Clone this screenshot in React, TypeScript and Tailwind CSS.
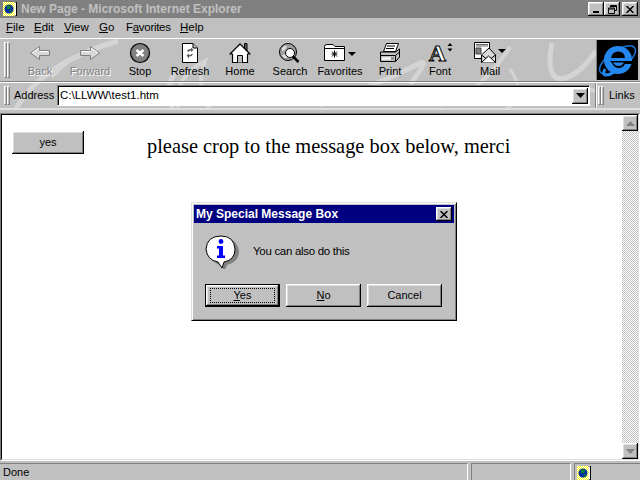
import type { ReactNode } from 'react';

const raised = 'shadow-[inset_-1px_-1px_0_#000,inset_1px_1px_0_#fff,inset_-2px_-2px_0_#808080,inset_2px_2px_0_#dfdfdf]';

function Grip() {
  return (
    <div className="flex self-stretch my-[3px]">
      <div className="w-[3px] border border-t-white border-l-white border-r-[#808080] border-b-[#808080]" />
      <div className="w-[3px] border border-t-white border-l-white border-r-[#808080] border-b-[#808080]" />
    </div>
  );
}

function BackIcon({ flip }: { flip?: boolean }) {
  return (
    <svg width="24" height="20" viewBox="0 0 24 20" className={flip ? '-scale-x-100' : ''}>
      <path d="M2.5 10 L11.5 3.5 V7.5 H21.5 V12.5 H11.5 V16.5 Z" fill="#d8d8d8" stroke="#808080" />
      <path d="M4 10 L11 5 M12 8.5 H20" stroke="#fff" fill="none" />
    </svg>
  );
}

function StopIcon() {
  return (
    <svg width="22" height="22" viewBox="0 0 22 22">
      <circle cx="11" cy="11" r="9.5" fill="#808080" stroke="#000" strokeWidth="1.2" />
      <path d="M7.5 8 L14.5 14 M14.5 8 L7.5 14" stroke="#fff" strokeWidth="2.6" />
    </svg>
  );
}

function RefreshIcon() {
  return (
    <svg width="20" height="22" viewBox="0 0 20 22">
      <path d="M2.5 1.5 H13 L17.5 6 V20.5 H2.5 Z" fill="#fff" stroke="#000" />
      <path d="M13 1.5 V6 H17.5" fill="#c0c0c0" stroke="#000" />
      <path d="M7 9 Q8 6.5 11 7 V5.5 L13.5 8 L11 10 V8.5 Q9 8.5 8.5 10 Z M13 12 Q12 15 9 14.5 V16.5 L6.5 13.5 L9 11.5 V13 Q11 13 11.5 12 Z" fill="#606060" />
    </svg>
  );
}

function HomeIcon() {
  return (
    <svg width="22" height="22" viewBox="0 0 22 22">
      <path d="M15.5 1.5 H18 V9 H15.5 Z" fill="#606060" stroke="#000" />
      <path d="M1 12 L11 2 L21 12 L18.5 12 V20.5 H3.5 V12 Z" fill="#fff" stroke="#000" strokeWidth="1.2" strokeLinejoin="round" />
      <path d="M8.5 20.5 V13.5 H13.5 V20.5" fill="#c0c0c0" stroke="#000" />
    </svg>
  );
}

function SearchIcon() {
  return (
    <svg width="24" height="22" viewBox="0 0 24 22">
      <circle cx="10" cy="10" r="8.5" fill="#a0a0a0" stroke="#000" />
      <path d="M4 6 Q7 3 9 4 L7 8 L4 9 Z M4 13 L8 12 L9 16 L6 16 Z" fill="#e0e0e0" />
      <circle cx="12" cy="11" r="4.5" fill="#fff" stroke="#000" />
      <path d="M15 14.5 L20.5 20" stroke="#000" strokeWidth="2.5" />
    </svg>
  );
}

function FavoritesIcon() {
  return (
    <svg width="34" height="20" viewBox="0 0 34 20">
      <path d="M1.5 17.5 V3.5 Q1.5 1.5 4 1.5 H10 L12 3.5 H21.5 V17.5 Z" fill="#fff" stroke="#000" />
      <path d="M1.5 5.5 H21.5" stroke="#000" />
      <path d="M11.5 7.5 V14.5 M8.5 11 H14.5 M9 8.5 L14 13.5 M14 8.5 L9 13.5" stroke="#000" />
      <path d="M25 9 H33 L29 13 Z" fill="#000" />
    </svg>
  );
}

function PrintIcon() {
  return (
    <svg width="22" height="22" viewBox="0 0 22 22">
      <path d="M7.5 1.5 H19.5 L16.5 9.5 H4.5 Z" fill="#fff" stroke="#000" />
      <path d="M8 4 H16 M7 6.5 H15" stroke="#000" />
      <path d="M1.5 10 H16.5 L20.5 7 V15 L16.5 19.5 H1.5 Z" fill="#c0c0c0" stroke="#000" />
      <path d="M1.5 13.5 H16.5 V19.5 M16.5 13.5 L20.5 10" stroke="#000" fill="none" />
      <path d="M3 15.5 H12 V17.5 H3 Z" fill="#fff" />
      <path d="M12 15.5 H15 V17.5 H12 Z" fill="#808080" />
    </svg>
  );
}

function FontIcon() {
  return (
    <div className="relative w-[26px] h-[22px] flex items-center">
      <span className="w-[21px] text-center leading-[20px] text-[24px] font-bold text-white [-webkit-text-stroke:1px_#000] font-['Liberation_Serif',serif]">A</span>
      <svg className="absolute right-0 top-0" width="6" height="10" viewBox="0 0 6 10">
        <path d="M0.5 4 L3 1 L5.5 4 Z M0.5 6.5 H5.5 L3 9.5 Z" fill="#000" />
      </svg>
    </div>
  );
}

function MailIcon() {
  return (
    <svg width="32" height="22" viewBox="0 0 32 22">
      <path d="M0.5 0.5 H15.5 V16.5 H0.5 Z" fill="#fff" stroke="#000" />
      <path d="M2 2.5 H14 M2 4 H14" stroke="#606060" />
      <path d="M2 6 H7 V12 H2 Z" fill="#808080" stroke="#404040" />
      <path d="M7.5 13 L15 6 L21.5 13 V20.5 H7.5 Z" fill="#d8d8d8" stroke="#000" />
      <path d="M7.5 20.5 L14.5 14 L21.5 20.5 M7.5 13 L12 16.5 M21.5 13 L17 16.5" fill="#fff" stroke="#000" />
      <path d="M24 7 H32 L28 11 Z" fill="#000" />
    </svg>
  );
}

function ToolButton({ label, icon, disabled }: { label: string; icon: ReactNode; disabled?: boolean }) {
  return (
    <div className="w-[50px] flex flex-col items-center">
      <div className="h-[22px] flex items-center justify-center">{icon}</div>
      <span className={`leading-[14px] whitespace-nowrap ${disabled ? 'text-[#808080] [text-shadow:1px_1px_0_#fff]' : 'text-black'}`}>{label}</span>
    </div>
  );
}

function IeLogo() {
  return (
    <svg width="41" height="40" viewBox="0 0 41 40">
      <rect width="41" height="40" fill="#000" />
      <ellipse cx="20.5" cy="20" rx="21" ry="9" transform="rotate(-35 20.5 20)" fill="none" stroke="#1874d8" strokeWidth="1.5" />
      <circle cx="21" cy="20" r="14" fill="#2288f0" />
      <path d="M14 18 Q15 11.5 21.5 11.5 Q27.5 11.5 28 18 Z" fill="#000" />
      <path d="M13 21 H36 V24 H28 Q26 28 22 28 Q17 28 15 23 Z" fill="#000" />
      <path d="M16 22.5 H27 Q25 26 21.5 26 Q18 26 16 22.5 Z" fill="#2288f0" />
      <path d="M8 29 Q5 35 9 35 Q13 35 17 32" fill="none" stroke="#2288f0" strokeWidth="3" />
    </svg>
  );
}

function PageIcon() {
  return (
    <svg width="14" height="14" viewBox="0 0 14 14">
      <defs>
        <pattern id="page-dither" width="2" height="2" patternUnits="userSpaceOnUse">
          <rect width="2" height="2" fill="#ffff00" />
          <rect width="1" height="1" fill="#ffffff" />
          <rect x="1" y="1" width="1" height="1" fill="#ffffff" />
        </pattern>
      </defs>
      <path d="M0 0 H12 V14 H0 Z" fill="url(#page-dither)" />
      <path d="M11.5 0 H13.5 V14 H11.5" fill="#fff" stroke="#000" />
      <circle cx="6" cy="7" r="4.5" fill="#0030a0" />
      <path d="M4 3 L8 4 L7 7 L4 7 Z M6 9 L9 8 L8 11 Z" fill="#108030" />
    </svg>
  );
}

function DialogButton({ children, focused }: { children: ReactNode; focused?: boolean }) {
  return (
    <div className={`w-[75px] h-[23px] flex items-center justify-center ${focused ? 'border border-black' : ''} ${raised}`}>
      {focused ? (
        <div className="w-[65px] h-[15px] flex items-center justify-center border border-dotted border-black">{children}</div>
      ) : children}
    </div>
  );
}

function ScrollButton({ up }: { up?: boolean }) {
  return (
    <div className={`w-4 h-4 bg-[#c0c0c0] flex items-center justify-center ${raised}`}>
      <svg width="9" height="5" viewBox="0 0 9 5">
        <path d={up ? 'M4.5 0 L9 5 H0 Z' : 'M0 0 H9 L4.5 5 Z'} fill="#808080" />
      </svg>
    </div>
  );
}

export default function App() {
  return (
    <div className="relative w-[640px] h-[480px] overflow-hidden flex flex-col bg-[#c0c0c0] text-black text-[11px] font-['Liberation_Sans',sans-serif]">
      {/* title bar */}
      <div className="h-[18px] bg-[#808080] flex items-center pl-[3px] pr-[2px]">
        <PageIcon />
        <span className="ml-[4px] font-bold text-[12px] text-[#c0c0c0]">New Page - Microsoft Internet Explorer</span>
        <div className="ml-auto flex items-center">
          <div className={`w-4 h-[14px] bg-[#c0c0c0] flex items-end justify-center pb-[3px] ${raised}`}><div className="w-[6px] h-[2px] bg-black" /></div>
          <div className={`w-4 h-[14px] bg-[#c0c0c0] flex items-center justify-center ${raised}`}>
            <svg width="9" height="9" viewBox="0 0 9 9"><path d="M2.5 2 V0.5 H8.5 V5.5 H6.5 M0.5 3 H6.5 V8.5 H0.5 Z M2.5 1.5 H8.5 M0.5 4 H6.5" fill="none" stroke="#000" /></svg>
          </div>
          <div className={`ml-[2px] w-4 h-[14px] bg-[#c0c0c0] flex items-center justify-center ${raised}`}>
            <svg width="8" height="7" viewBox="0 0 8 7"><path d="M0.5 0 L7.5 7 M7.5 0 L0.5 7" stroke="#000" strokeWidth="1.5" /></svg>
          </div>
        </div>
      </div>

      {/* menu bar */}
      <div className="h-[20px] flex items-center pl-[6px] text-[11.5px]">
        <span className="w-[28px]"><u>F</u>ile</span>
        <span className="w-[30px]"><u>E</u>dit</span>
        <span className="w-[35px]"><u>V</u>iew</span>
        <span className="w-[27px]"><u>G</u>o</span>
        <span className="w-[54px] tracking-[-0.3px]">F<u>a</u>vorites</span>
        <span><u>H</u>elp</span>
      </div>

      {/* toolbars with the swoosh artwork behind them */}
      <div className="relative h-[72px] border-t border-t-white border-b-2 border-b-[#dfdfdf]">
        <svg className="absolute inset-0" width="640" height="69" viewBox="0 0 640 69" fill="none">
          <g stroke="#d4d4d4" strokeWidth="5">
            <path d="M16 70 Q40 25 118 2" />
            <path d="M118 2 Q80 8 52 38" strokeWidth="3" />
            <path d="M178 30 Q160 50 180 68" />
            <path d="M172 70 Q178 35 205 22 Q195 50 210 70" strokeWidth="4" />
            <path d="M320 66 Q380 45 420 24 Q430 20 410 45" />
            <path d="M440 66 Q480 55 510 8" strokeWidth="4" />
            <path d="M510 30 Q530 60 505 70" strokeWidth="3" />
            <path d="M552 4 Q545 40 562 40 Q580 36 596 12" />
            <path d="M548 58 Q570 44 596 52" strokeWidth="4" />
          </g>
        </svg>

        <div className="relative h-[43px] flex items-stretch pl-[4px] border-b border-b-[#808080]">
          <Grip />
          <div className="ml-[5px] pt-[3px] flex flex-1 items-start">
            <ToolButton label="Back" icon={<BackIcon />} disabled />
            <ToolButton label="Forward" icon={<BackIcon flip />} disabled />
            <ToolButton label="Stop" icon={<StopIcon />} />
            <ToolButton label="Refresh" icon={<RefreshIcon />} />
            <ToolButton label="Home" icon={<HomeIcon />} />
            <ToolButton label="Search" icon={<SearchIcon />} />
            <ToolButton label="Favorites" icon={<FavoritesIcon />} />
            <ToolButton label="Print" icon={<PrintIcon />} />
            <ToolButton label="Font" icon={<FontIcon />} />
            <ToolButton label="Mail" icon={<MailIcon />} />
          </div>
          <div className="mr-[2px] self-start mt-[1px] border-l border-l-[#808080]">
            <IeLogo />
          </div>
        </div>

        <div className="relative h-[26px] flex items-center pl-[4px] border-t border-t-white">
          <Grip />
          <span className="ml-[4px] w-[39px] whitespace-nowrap">Address</span>
          <div className="ml-[4px] w-[533px] h-[21px] bg-white flex items-center pl-[2px] border border-t-[#808080] border-l-[#808080] border-r-white border-b-white shadow-[inset_1px_1px_0_#000]">
            <span className="flex-1 text-[11.5px]">C:\LLWW\test1.htm</span>
            <div className={`w-4 h-4 mr-[1px] bg-[#c0c0c0] flex items-center justify-center ${raised}`}>
              <svg width="9" height="5" viewBox="0 0 9 5"><path d="M0 0 H9 L4.5 5 Z" fill="#000" /></svg>
            </div>
          </div>
          <div className="ml-[5px] w-[2px] self-stretch bg-[#808080] border-r border-r-white" />
          <div className="ml-[1px] h-full flex"><Grip /></div>
          <span className="ml-[5px] whitespace-nowrap">Links</span>
        </div>
      </div>

      {/* page and scrollbar */}
      <div className="mt-[3px] flex-1 flex border border-t-[#808080] border-l-[#808080] border-r-white border-b-white">
        <div className="flex-1 flex border border-t-black border-l-black border-r-[#dfdfdf] border-b-[#dfdfdf]">
          <div className="flex-1 bg-white flex items-start pl-[10px] pt-[16px]">
            <div className={`w-[72px] h-[23px] bg-[#c0c0c0] flex items-center justify-center ${raised}`}>yes</div>
            <p className="ml-[63px] mt-[2px] whitespace-nowrap leading-[26px] text-[20.4px] font-['Liberation_Serif',serif]">please crop to the message box below, merci</p>
          </div>
          <div className="w-4 flex flex-col justify-between bg-[repeating-conic-gradient(#c0c0c0_0%_25%,#ffffff_0%_50%)] bg-[length:2px_2px]">
            <ScrollButton up />
            <ScrollButton />
          </div>
        </div>
      </div>

      {/* status bar */}
      <div className="h-[18px] mt-[1px] flex items-stretch pt-[1px]">
        <div className="w-[468px] pl-[3px] leading-[16px] border-t border-t-[#808080] border-r border-r-white">Done</div>
        <div className="ml-[3px] w-[100px] border border-t-[#808080] border-l-[#808080] border-r-white border-b-0" />
        <div className="ml-[3px] flex-1 pl-[2px] pt-[2px] border border-t-[#808080] border-l-[#808080] border-r-0 border-b-0"><PageIcon /></div>
      </div>

      {/* message box */}
      <div className="absolute left-[191px] top-[202px] w-[266px] h-[119px] bg-[#c0c0c0] p-[2px] flex flex-col border border-t-[#dfdfdf] border-l-[#dfdfdf] border-r-black border-b-black shadow-[inset_1px_1px_0_#fff,inset_-1px_-1px_0_#808080]">
        <div className="h-[18px] bg-[#000080] flex items-center justify-between pl-[2px] pr-[2px]">
          <span className="font-bold text-[12px] text-white">My Special Message Box</span>
          <div className={`w-4 h-[14px] bg-[#c0c0c0] flex items-center justify-center ${raised}`}>
            <svg width="8" height="7" viewBox="0 0 8 7"><path d="M0.5 0 L7.5 7 M7.5 0 L0.5 7" stroke="#000" strokeWidth="1.5" /></svg>
          </div>
        </div>
        <div className="mt-[12px] h-[34px] pl-[11px] flex items-start">
          <svg width="34" height="34" viewBox="0 0 34 34">
            <path d="M16 2 Q30 2 32 15 Q32 26 20 29 L18 34 L16 33 L14 29 Q3 27 2 15 Q3 2 16 2 Z" fill="#808080" transform="translate(2 1)" />
            <path d="M16 1 Q29 1 30 14 Q30 25 19 27 L17 33 L13 27 Q2 25 1 14 Q2 1 16 1 Z" fill="#fff" stroke="#000" />
            <circle cx="16" cy="6.5" r="2.4" fill="#0000ff" />
            <path d="M12 11 H18 V20.5 H20 V23 H12 V20.5 H14 V13.5 H12 Z" fill="#0000ff" />
          </svg>
          <span className="ml-[14px] mt-[8px] text-[11.5px] tracking-[-0.3px]">You can also do this</span>
        </div>
        <div className="mt-[15px] pl-[11px] flex gap-[6px]">
          <DialogButton focused><span><u>Y</u>es</span></DialogButton>
          <DialogButton><span><u>N</u>o</span></DialogButton>
          <DialogButton>Cancel</DialogButton>
        </div>
      </div>
    </div>
  );
}
